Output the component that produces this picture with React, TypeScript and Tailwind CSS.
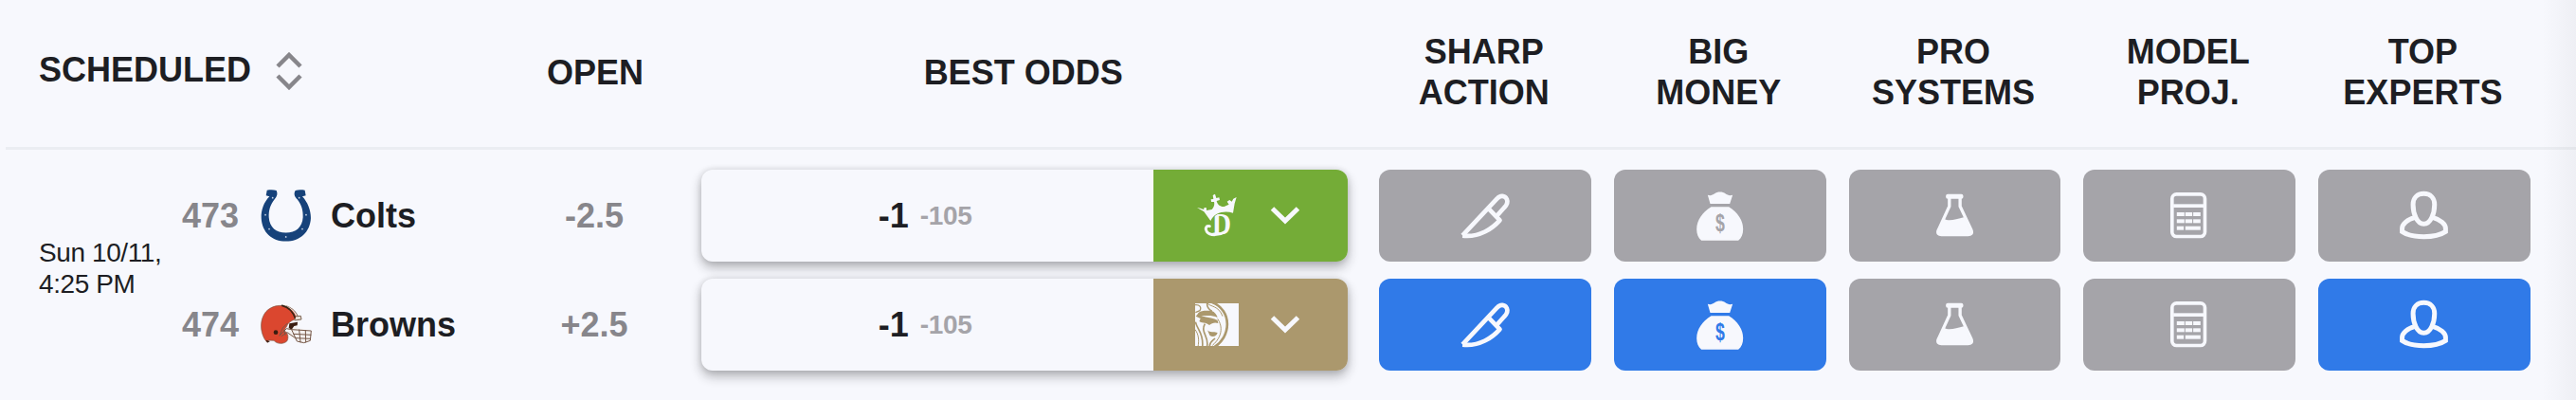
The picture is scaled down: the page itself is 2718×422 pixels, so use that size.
import type { ReactNode } from "react";
import { clsx } from "clsx";

type SignalKey = "sharp" | "money" | "systems" | "model" | "experts";

interface TeamRow {
  rotation: string;
  name: string;
  logo: ReactNode;
  open: string;
  line: string;
  juice: string;
  book: ReactNode;
  bookClass: string;
  active: SignalKey[];
}

const signals: { key: SignalKey; label: [string, string]; icon: ReactNode }[] = [
  { key: "sharp", label: ["SHARP", "ACTION"], icon: <KnifeIcon /> },
  { key: "money", label: ["BIG", "MONEY"], icon: <MoneyBagIcon /> },
  { key: "systems", label: ["PRO", "SYSTEMS"], icon: <FlaskIcon /> },
  { key: "model", label: ["MODEL", "PROJ."], icon: <CalculatorIcon /> },
  { key: "experts", label: ["TOP", "EXPERTS"], icon: <ExpertIcon /> },
];

const teams: TeamRow[] = [
  {
    rotation: "473",
    name: "Colts",
    logo: <ColtsLogo />,
    open: "-2.5",
    line: "-1",
    juice: "-105",
    book: <CrownBookLogo />,
    bookClass: "bg-[#74ac37]",
    active: [],
  },
  {
    rotation: "474",
    name: "Browns",
    logo: <BrownsLogo />,
    open: "+2.5",
    line: "-1",
    juice: "-105",
    book: <LionBookLogo />,
    bookClass: "bg-[#ab986d]",
    active: ["sharp", "money", "experts"],
  },
];

const columns =
  "grid grid-cols-[534px_176px_727.3px_repeat(5,247.7px)_1fr]";

function KnifeIcon() {
  return (
    <svg viewBox="21.5 52 180 180" className="size-[60px]" fill="none" stroke="#f7f8fd" strokeWidth="14" strokeLinejoin="round">
      <path d="M40 206 L149 90 C160 77 174 80 180 91 C184 100 180 110 172 118 L144 149" />
      <path d="M121 120 L158 158 C135 184 94 213 40 207" />
    </svg>
  );
}

function MoneyBagIcon() {
  return (
    <svg viewBox="44.5 52 180 180" className="size-[60px]" fill="#f7f8fd">
      <path d="M95 78 C103 81 110 79 117 74 C125 67 143 67 151 74 C158 79 165 81 174 78 L165 106 H103 Z" />
      <path d="M106 116 H162 C190 132 207 160 207 186 C207 202 202 214 192 222 H75 C65 214 60 202 60 186 C60 160 78 132 106 116 Z" />
      <text
        transform="translate(134 194) scale(.7 1)"
        textAnchor="middle"
        fontSize="76"
        className="fill-current font-['Liberation_Sans',Arial,sans-serif] font-bold"
      >
        $
      </text>
    </svg>
  );
}

function FlaskIcon() {
  return (
    <svg viewBox="37.6 52 180 180" className="size-[60px]" fill="#f7f8fd">
      <rect x="98" y="75" width="55" height="15" rx="6" />
      <path
        d="M109 85 V114 L75 188 C69 200 76 204 84 204 H168 C177 204 183 200 178 188 L143 114 V85"
        fill="none"
        stroke="#f7f8fd"
        strokeWidth="10"
      />
      <path d="M92 154 C110 163 128 155 157 148 L178 196 L170 206 H82 L74 196 Z" />
    </svg>
  );
}

function CalculatorIcon() {
  return (
    <svg viewBox="780.6 52 180 180" className="size-[60px]" fill="#f7f8fd">
      <rect x="816" y="75.5" width="104" height="134" rx="14" fill="none" stroke="#f7f8fd" strokeWidth="11" />
      <rect x="820" y="107" width="98" height="11" />
      {[133, 155].map((y) => (
        <g key={y}>
          <rect x="831" y={y} width="24" height="12" />
          <rect x="858" y={y} width="22" height="12" />
          <rect x="883" y={y} width="23" height="12" />
        </g>
      ))}
      <rect x="831" y="177" width="22" height="12" />
      <rect x="858" y="177" width="48" height="12" />
    </svg>
  );
}

function ExpertIcon() {
  return (
    <svg viewBox="83.8 52 180 180" className="size-[60px]" fill="none" stroke="#f7f8fd" strokeWidth="15">
      <path d="M172 74 C150 74 138 89 138 108 C138 136 150 170 172 170 C194 170 206 136 206 108 C206 89 194 74 172 74 Z" />
      <path d="M145 149 C119 156 103.500 170 103.500 184 V194 C118 204 145 210 172 210 C200 210 226 204 241 194 V184 C241 170 225 156 200 149" />
    </svg>
  );
}

function ColtsLogo() {
  const nails = [[84, 86], [168, 86], [61, 140], [190, 140], [73, 185], [178, 185], [126, 210]];
  return (
    <svg viewBox="46 57 162 170" className="h-[56.6px] w-[54px]">
      <path
        d="M66 62 C76 60 88 60 96 63 C101 73 98 82 90 91 C76 108 71 128 72 148 C74 180 95 197 126 197 C157 197 178 180 180 148 C181 128 176 108 162 91 C153 82 150 73 156 63 C164 60 176 60 186 62 L189 79 L178 82 C195 100 205 125 205 150 C203 195 170 224 126 224 C82 224 50 195 48 150 C47 125 56 100 74 82 L63 79 Z"
        fill="#16427a"
      />
      {nails.map(([cx, cy]) => (
        <circle key={`${cx}-${cy}`} cx={cx} cy={cy} r="2.600" fill="#c9d5e6" />
      ))}
    </svg>
  );
}

function BrownsLogo() {
  return (
    <svg viewBox="41 423 168 126" className="h-[42px] w-[56px]" fill="none" strokeLinecap="round" strokeLinejoin="round">
      <path d="M134 490 L161 478 L160 498 L204 508 L201 538 L180 545 L156 538 L128 520 Z" fill="#f4f1f0" />
      <path
        d="M63 542 C44 520 40 482 54 457 C72 423 118 420 144 438 C154 446 160 455 164 468 C144 472 132 480 127 492 L118 506 C132 512 134 532 126 541 C114 550 96 549 86 538 L70 537 Z"
        fill="#db472f"
        stroke="#7b5644"
        strokeWidth="2"
      />
      <path d="M122 428 C142 434 154 448 161 467" stroke="#e8e0d8" strokeWidth="4" />
      <path d="M112 427 C134 432 147 447 154 469" stroke="#3a2415" strokeWidth="5" />
      <path d="M127 428 C145 435 158 448 165 466" stroke="#7b6250" strokeWidth="1.500" />
      <path d="M135 484 L161 479 L160 490 L150 492 L142 503 L133 498 Z" fill="#3a1d10" />
      <path d="M156 461 L171 460 L173 471 L152 474" stroke="#7b6250" strokeWidth="3" fill="#e8ded4" />
      <circle cx="92" cy="512" r="7" fill="#3a1d10" />
      <path d="M61 536 L74 540 L65 545 Z" fill="#3a1d10" />
      <g stroke="#765848" strokeWidth="3">
        <path d="M104 522 L114 498 L128 484 M104 522 L126 500 L142 503 L204 507 L201 538 L181 545 L159 540 L142 503" />
        <path d="M148 517 L203 520 M110 524 L128 512 L154 530 L201 532" />
        <path d="M166 504 L170 543 M186 506 L187 543 M118 506 L122 520" />
      </g>
    </svg>
  );
}

function CrownBookLogo() {
  return (
    <svg viewBox="155 104 132 138" className="h-[46px] w-[44px] overflow-visible" fill="#f7f8fd">
      <text
        transform="translate(206 232)"
        fontSize="92"
        textLength="60"
        lengthAdjust="spacingAndGlyphs"
        className="font-['Liberation_Serif',serif] font-bold"
      >
        D
      </text>
      <path
        d="M198 208 C186 205 183 216 189 225 C199 239 228 237 246 226"
        fill="none"
        stroke="#f7f8fd"
        strokeWidth="9"
        strokeLinecap="round"
      />
      <path
        d="M158 149 L168 151 L179 155 L181 149 L188 150 L188 158 L205 155 C212 148 214 140 212 131 L203 131 L202 123 L210 122 L208 110 L215 106 L219 119 L228 117 L230 125 L220 128 C223 140 231 147 244 146 L259 139 L253 130 L261 125 L268 130 L273 121 L283 116 L277 136 L272 166 C245 158 213 164 201 191 L180 162 Z"
        stroke="#74ac37"
        strokeWidth="4"
        paintOrder="stroke"
      />
    </svg>
  );
}

function LionBookLogo() {
  return (
    <svg viewBox="151 449 138 136" className="h-[45.300px] w-[46px]" fill="none" stroke="#ab986d">
      <rect x="151" y="449" width="138" height="136" fill="#f7f8fd" stroke="none" />
      <path d="M205 446 C268 470 268 556 208 590" strokeWidth="8" />
      <path d="M190 449 C198 460 226 456 238 490" strokeWidth="3" />
      <path d="M189 449 C188 462 194 468 204 474" strokeWidth="5" />
      <path d="M151 454 C165 452 172 462 166 472 L152 478" strokeWidth="4" />
      <path d="M158 484 C168 468 188 474 202 472 C214 476 220 486 222 494 C206 486 190 488 170 489 C188 494 208 494 222 503 L224 512 C212 508 204 512 196 518 C184 508 170 512 164 506 L168 497 L153 490 Z" fill="#ab986d" stroke="none" />
      <path d="M152 508 C158 532 178 546 174 588" strokeWidth="5" />
      <path d="M182 514 C166 542 198 556 188 588" strokeWidth="5" />
      <path d="M151 532 C162 548 164 564 160 588" strokeWidth="3" />
      <path d="M190 534 C198 544 210 536 222 542 C219 553 206 558 197 550 Z" fill="#ab986d" stroke="none" />
      <path d="M222 498 C240 524 236 556 206 582" strokeWidth="3" />
      <path d="M197 587 C195 572 206 568 214 560" strokeWidth="5" />
    </svg>
  );
}

function SortIcon() {
  return (
    <svg viewBox="0 0 28 40" className="mt-1 h-10 w-7" fill="none" stroke="#87868b" strokeWidth="4.500">
      <path d="M2 15 L14 3 L26 15 M2 25 L14 37 L26 25" />
    </svg>
  );
}

function OddsButton({ team }: { team: TeamRow }) {
  return (
    <button className="ml-[23.700px] flex h-full w-[682.300px] overflow-hidden rounded-xl bg-[#f7f8fd] text-left shadow-[0_6px_12px_rgba(30,30,35,0.32),0_0_6px_rgba(30,30,35,0.12)]">
      <span className="flex h-full w-[477px] items-center justify-center gap-3 pr-1">
        <span>{team.line}</span>
        <span className="text-[28px] tracking-[-0.3px] text-[#a5a4a9]">{team.juice}</span>
      </span>
      <span className={clsx("flex h-full flex-1 items-center pl-11", team.bookClass)}>
        <span className="flex w-[46px] justify-center">{team.book}</span>
        <svg viewBox="0 0 32 20" className="ml-[33px] h-5 w-8" fill="none" stroke="#f7f8fd" strokeWidth="5">
          <path d="M2.500 3 L16 16 L29.500 3" />
        </svg>
      </span>
    </button>
  );
}

function TeamLine({ team }: { team: TeamRow }) {
  return (
    <div className={clsx(columns, "h-[96.700px] items-center")}>
      <div className="flex items-center pl-[186px]">
        <span className="w-[81px] text-[#87868b]">{team.rotation}</span>
        <span className="flex w-[58px] justify-center">{team.logo}</span>
        <span className="ml-[18px]">{team.name}</span>
      </div>
      <div className="pr-0.5 text-center text-[#87868b]">{team.open}</div>
      <OddsButton team={team} />
      {signals.map(({ key, icon }) => (
        <button
          key={key}
          className={clsx(
            "mx-3 flex h-full items-center justify-center rounded-xl",
            team.active.includes(key)
              ? "bg-[#307ae8] text-[#307ae8]"
              : "bg-[#a5a4a9] text-[#a5a4a9]",
          )}
        >
          {icon}
        </button>
      ))}
    </div>
  );
}

export default function App() {
  return (
    <main className="relative h-[422px] w-full overflow-hidden bg-[#f7f8fd] pl-1.5 font-['Liberation_Sans',Arial,sans-serif] text-4xl leading-[43px] font-bold text-[#1d1e23]">
      <header className={clsx(columns, "h-[158px] items-center border-b-[3px] border-[#ebedf2] pb-[3px]")}>
        <div className="flex items-center gap-[26px] pb-1.5 pl-[35px]">
          SCHEDULED
          <SortIcon />
        </div>
        <div className="text-center">OPEN</div>
        <div className="text-center">BEST ODDS</div>
        {signals.map(({ key, label }) => (
          <div key={key} className="pr-[3px] text-center">
            {label[0]}
            <br />
            {label[1]}
          </div>
        ))}
      </header>

      <section className="relative flex flex-col gap-[18.300px] pt-[21px]">
        {teams.map((team) => (
          <TeamLine key={team.rotation} team={team} />
        ))}
        {/* the kickoff time spans both team lines */}
        <div className="absolute top-[92px] left-[35px] text-[28px] leading-[33px] font-normal tracking-[-0.4px]">
          Sun 10/11,
          <br />
          4:25 PM
        </div>
      </section>

      <div className="absolute inset-y-0 right-0 w-9 bg-linear-to-r from-transparent to-[#1d1e23]/4" />
    </main>
  );
}
